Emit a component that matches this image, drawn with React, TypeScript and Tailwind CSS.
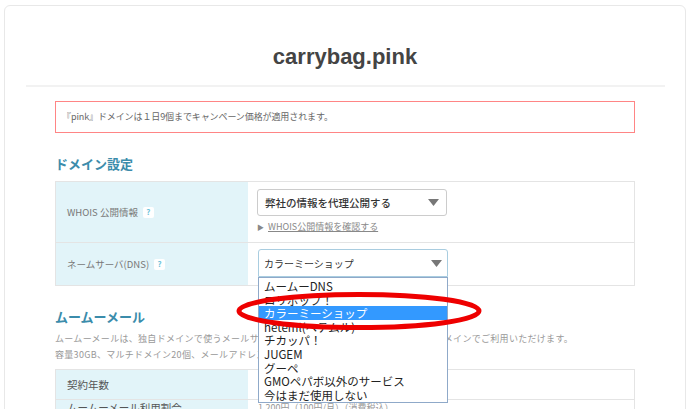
const jp = { fontFamily: '"Noto Sans CJK JP", "Noto Sans", sans-serif' };

const dnsOptions = [
  'ムームーDNS',
  'ロリポップ！',
  'カラーミーショップ',
  'heteml(ヘテムル)',
  'チカッパ！',
  'JUGEM',
  'グーペ',
  'GMOペパボ以外のサービス',
  '今はまだ使用しない',
];

function Help() {
  return (
    <span className="ml-[5px] inline-flex h-[11px] w-[11px] items-center justify-center rounded-[2px] bg-white text-[8px] font-bold leading-none text-[#6fc3da]">
      ?
    </span>
  );
}

function Arrow() {
  return (
    <svg width="11" height="7" viewBox="0 0 11 7" className="shrink-0">
      <path d="M0 0 H11 L5.5 7 Z" fill="#777" />
    </svg>
  );
}

export default function App() {
  return (
    <div className="h-[409px] w-[690px] overflow-hidden bg-white px-[4px] pt-[5px]" style={jp}>
      <div className="relative h-[520px] rounded-[6px] border border-[#e8e8e8]">
        {/* タイトル */}
        <div className="pt-[38px] text-center">
          <h1
            className="text-[22px] font-bold leading-[26px] text-[#444]"
            style={{ fontFamily: '"Liberation Sans", Arial, sans-serif' }}
          >
            carrybag.pink
          </h1>
        </div>
        <div className="mt-[15px] ml-[21px] mr-[20px] h-[2px] bg-[#f2f2f2]" />

        <div className="ml-[50px] w-[580px]">
          {/* お知らせ */}
          <div className="mt-[14px] flex h-[32px] items-center border border-[#ff8585] px-[6px] text-[9px] tracking-[-0.1px] text-[#666]">
            『pink』ドメインは１日9個までキャンペーン価格が適用されます。
          </div>

          {/* ドメイン設定 */}
          <h2 className="mt-[22px] text-[13px] font-bold leading-[18px] text-[#3b8cab]">ドメイン設定</h2>
          <div className="relative mt-[8px] border border-[#e4e4e4]">
            <div className="flex h-[61px] border-b border-[#e4e4e4]">
              <div className="flex w-[192px] items-center bg-[#e2f4f9] pl-[11px] text-[9.5px] text-[#777]">
                WHOIS 公開情報
                <Help />
              </div>
              <div className="flex-1 pl-[9px] pt-[7px]">
                <div className="flex h-[27px] w-[190px] items-center justify-between rounded-[3px] border border-[#cccccc] bg-white px-[7px] text-[10.5px] font-medium text-[#333]">
                  弊社の情報を代理公開する
                  <Arrow />
                </div>
                <div className="mt-[4px] flex items-center text-[9px] text-[#888]">
                  <span className="mr-[4px] text-[7px]">▶</span>
                  <span className="underline">WHOIS公開情報を確認する</span>
                </div>
              </div>
            </div>
            <div className="flex h-[42px]">
              <div className="flex w-[192px] items-center bg-[#e2f4f9] pl-[11px] text-[9.5px] text-[#777]">
                ネームサーバ(DNS)
                <Help />
              </div>
              <div className="relative flex-1 pl-[10px] pt-[6px]">
                <div className="flex h-[28px] w-[190px] items-center justify-between rounded-t-[3px] border border-[#a9cde0] bg-white px-[5px] text-[10px] text-[#333]">
                  カラーミーショップ
                  <Arrow />
                </div>
                {/* プルダウン */}
                <div className="absolute left-[10px] top-[34px] z-10 w-[190px] border border-[#8fa9c9] bg-white py-[1px]">
                  {dnsOptions.map((o) => (
                    <div
                      key={o}
                      className={`h-[13.6px] pl-[5px] text-[11.5px] leading-[14px] ${
                        o === 'カラーミーショップ' ? 'bg-[#3399ff] text-white' : 'text-[#222]'
                      }`}
                    >
                      {o}
                    </div>
                  ))}
                </div>
              </div>
            </div>
            {/* 赤丸 */}
            <svg
              className="absolute left-[180px] top-[109px] z-20"
              width="246"
              height="40"
              viewBox="0 0 246 40"
            >
              <ellipse cx="123" cy="20" rx="120" ry="16.5" fill="none" stroke="#ee0000" strokeWidth="5" />
            </svg>
          </div>

          {/* ムームーメール */}
          <h2 className="mt-[22px] text-[13px] font-bold leading-[18px] text-[#3b8cab]">ムームーメール</h2>
          <p className="mt-[5px] text-[9px] leading-[16px] tracking-[0.3px] text-[#999]">
            ムームーメールは、独自ドメインで使うメールサービスです。ムームードメインで取得したドメインでご利用いただけます。
            <br />
            容量30GB、マルチドメイン20個、メールアドレスの作成数は無制限です。
          </p>
          <div className="mt-[6px] border border-[#e4e4e4]">
            <div className="flex h-[30px] border-b border-[#e4e4e4]">
              <div className="flex w-[192px] items-center bg-[#e2f4f9] pl-[11px] text-[10.5px] text-[#555]">契約年数</div>
              <div className="flex-1" />
            </div>
            <div className="flex h-[40px]">
              <div className="w-[192px] bg-[#e2f4f9] pl-[11px] text-[10.5px] leading-[16px] text-[#555]">
                ムームーメール利用割合
              </div>
              <div className="flex-1 pl-[10px] text-[9px] leading-[16px] text-[#999]">
                1,200円（100円/月）（消費税込）
              </div>
            </div>
          </div>
        </div>
      </div>
    </div>
  );
}
